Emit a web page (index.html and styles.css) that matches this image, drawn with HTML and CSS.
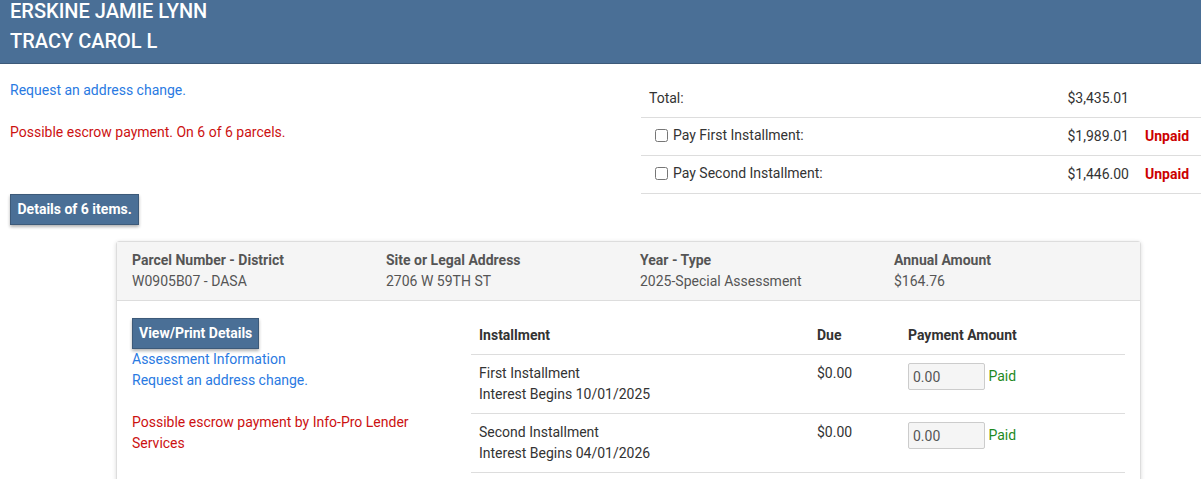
FILE: index.html
```html
<!DOCTYPE html>
<html>
<head>
<meta charset="utf-8">
<link rel="stylesheet" href="styles.css">
</head>
<body>
<header class="owner-bar">
  <div class="owner-names">
    <div class="owner-line">ERSKINE JAMIE LYNN</div>
    <div class="owner-line">TRACY CAROL L</div>
  </div>
</header>

<main class="page">
  <section class="summary">
    <div class="summary-left">
      <a class="link first-link" href="#">Request an address change.</a>
      <p class="warn escrow-note">Possible escrow payment. On 6 of 6 parcels.</p>
    </div>
    <table class="totals">
      <tr class="total-row">
        <td class="t-label">Total:</td>
        <td class="t-amount">$3,435.01</td>
        <td class="t-status"></td>
      </tr>
      <tr>
        <td class="t-label"><label class="chk"><input type="checkbox"> Pay First Installment:</label></td>
        <td class="t-amount">$1,989.01</td>
        <td class="t-status unpaid">Unpaid</td>
      </tr>
      <tr>
        <td class="t-label"><label class="chk"><input type="checkbox"> Pay Second Installment:</label></td>
        <td class="t-amount">$1,446.00</td>
        <td class="t-status unpaid">Unpaid</td>
      </tr>
    </table>
  </section>

  <button class="btn details-btn">Details of 6 items.</button>

  <article class="card">
    <div class="card-head">
      <div class="col">
        <div class="col-label">Parcel Number - District</div>
        <div class="col-value">W0905B07 - DASA</div>
      </div>
      <div class="col">
        <div class="col-label">Site or Legal Address</div>
        <div class="col-value">2706 W 59TH ST</div>
      </div>
      <div class="col">
        <div class="col-label">Year - Type</div>
        <div class="col-value">2025-Special Assessment</div>
      </div>
      <div class="col col-last">
        <div class="col-label">Annual Amount</div>
        <div class="col-value">$164.76</div>
      </div>
    </div>
    <div class="card-body">
      <div class="card-side">
        <button class="btn view-btn">View/Print Details</button>
        <a class="link block" href="#">Assessment Information</a>
        <a class="link block" href="#">Request an address change.</a>
        <p class="warn lender">Possible escrow payment by Info-Pro Lender Services</p>
      </div>
      <table class="inst">
        <thead>
          <tr>
            <th class="c-inst">Installment</th>
            <th class="c-due">Due</th>
            <th class="c-pay">Payment Amount</th>
          </tr>
        </thead>
        <tbody>
          <tr>
            <td>First Installment<br>Interest Begins 10/01/2025</td>
            <td>$0.00</td>
            <td><input class="amt" type="text" value="0.00" readonly> <span class="paid">Paid</span></td>
          </tr>
          <tr>
            <td>Second Installment<br>Interest Begins 04/01/2026</td>
            <td>$0.00</td>
            <td><input class="amt" type="text" value="0.00" readonly> <span class="paid">Paid</span></td>
          </tr>
        </tbody>
      </table>
    </div>
  </article>
</main>
</body>
</html>
```

FILE: styles.css
```css
* { box-sizing: border-box; }
html, body {
  margin: 0;
  padding: 0;
  background: #fff;
  font-family: Roboto, "Liberation Sans", Arial, sans-serif;
  font-size: 14px;
  color: #333;
  overflow: hidden;
}

.owner-bar {
  height: 64px;
  background: #4a6f96;
  border-bottom: 1px solid #3d5a79;
  color: #fff;
  padding: 0 10px;
  overflow: hidden;
}
.owner-names { margin-top: -4px; }
.owner-line {
  font-size: 20px;
  font-weight: 500;
  line-height: 30px;
}

.page { padding: 0 0 0 10px; }

.summary {
  display: flex;
  justify-content: space-between;
}
.summary-left {
  padding-top: 16px;
}
.link {
  color: #2a7ae2;
  text-decoration: none;
  line-height: 20px;
}
.first-link { display: block; }
.warn { color: #cc1111; margin: 0; }
.escrow-note { margin-top: 22px; line-height: 20px; }

.totals {
  width: 560px;
  margin-top: 15px;
  border-collapse: collapse;
}
.totals td {
  padding: 0 8px;
  height: 38px;
  vertical-align: middle;
  border-bottom: 1px solid #ddd;
}
.totals .total-row td { height: 38px; }
.t-amount { text-align: right; }
.t-status { width: 64px; }
.unpaid { color: #cc0000; font-weight: bold; }
.chk {
  display: inline-flex;
  align-items: center;
  gap: 5px;
  padding-left: 6px;
}
.chk input {
  margin: 0;
  width: 13px;
  height: 13px;
}

.btn {
  display: block;
  background: #4a6f96;
  color: #fff;
  border: 1px solid #3d5a79;
  font-family: inherit;
  font-size: 14px;
  font-weight: bold;
  box-shadow: 0 2px 3px rgba(0,0,0,0.3);
  cursor: pointer;
}
.details-btn {
  margin-top: 0;
  height: 31px;
  padding: 0 6.5px;
}

.card {
  margin: 16px 0 0 106px;
  width: 1025px;
  border: 1px solid #ddd;
  border-radius: 3px;
  box-shadow: 0 1px 4px rgba(0,0,0,0.15);
}
.card-head {
  display: flex;
  background: #f5f5f5;
  border-bottom: 1px solid #ddd;
  padding: 8px 15px 8px;
}
.col { flex: none; width: 254px; line-height: 21px; }
.col-last { flex: 1; width: auto; }
.col-label { font-weight: bold; color: #555; }
.col-value { color: #555; }

.card-body {
  display: flex;
  padding: 16px 15px 20px;
}
.card-side {
  width: 339px;
  line-height: 21px;
}
.view-btn {
  margin-top: 1px;
  height: 31px;
  padding: 0 6px;
}
.block { display: block; line-height: 21px; }
.lender { margin-top: 21px; line-height: 21px; width: 290px; }

.inst {
  width: 654px;
  border-collapse: collapse;
}
.inst th {
  text-align: left;
  font-weight: bold;
  padding: 0 8px;
  height: 38px;
  border-bottom: 1px solid #ddd;
}
.inst td {
  padding: 8px;
  line-height: 21px;
  vertical-align: top;
  border-bottom: 1px solid #ddd;
}
.c-inst { width: 338px; }
.c-due { width: 91px; }
.amt {
  width: 77px;
  height: 27px;
  border: 1px solid #ccc;
  border-radius: 2px;
  background: #f5f5f5;
  color: #555;
  font-family: inherit;
  font-size: 14px;
  padding: 0 4px;
  vertical-align: top;
}
.paid { color: #1e8a1e; line-height: 27px; }
```
